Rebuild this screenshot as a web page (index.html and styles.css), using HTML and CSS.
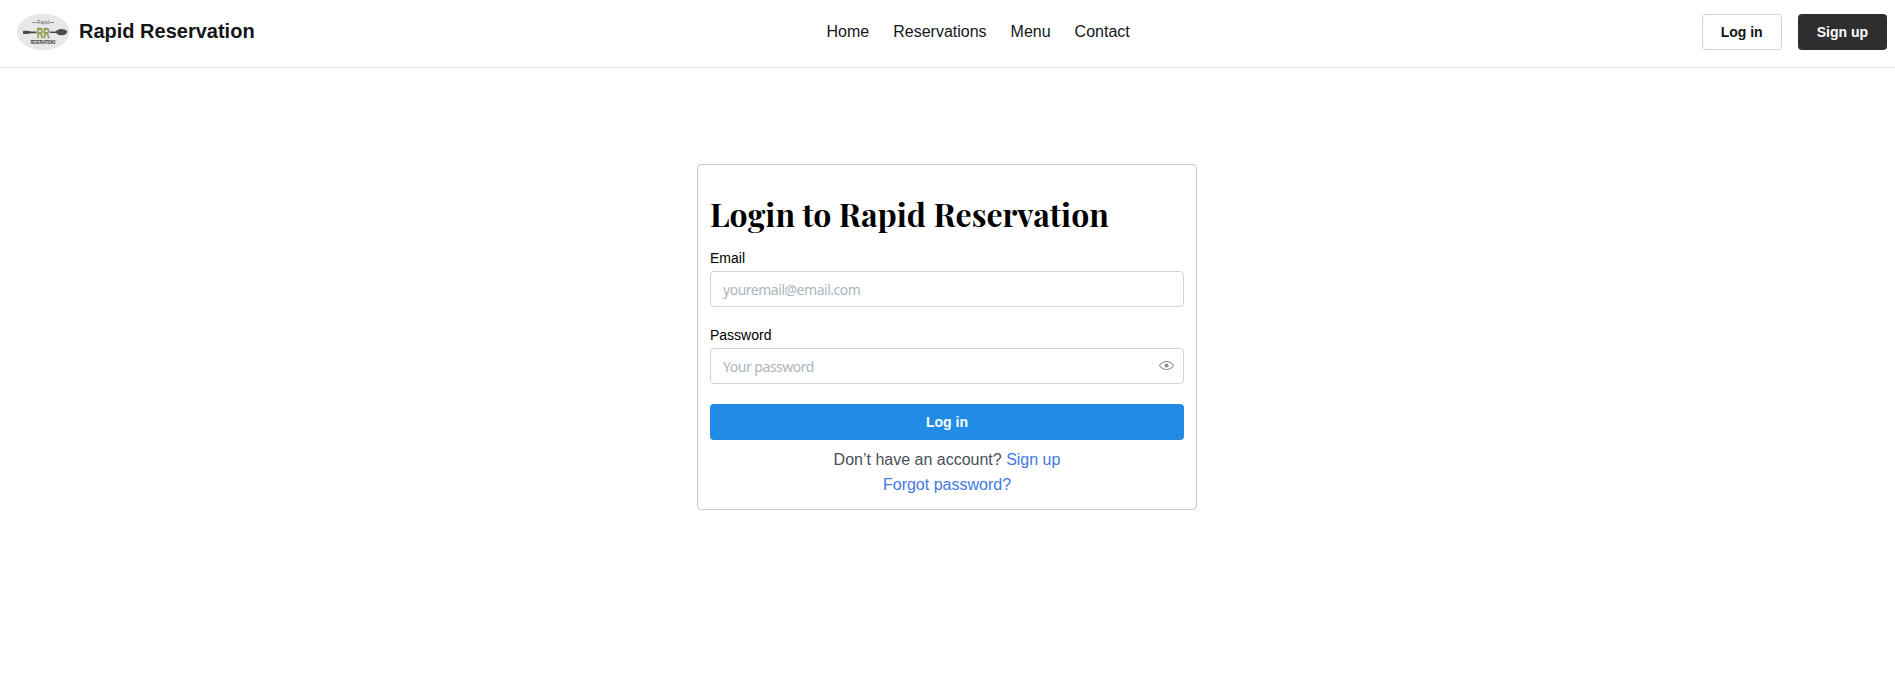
FILE: index.html
```html
<!DOCTYPE html>
<html lang="en">
<head>
<meta charset="utf-8">
<title>Rapid Reservation</title>
<link rel="stylesheet" href="styles.css">
</head>
<body>
<header class="header">
  <a class="brand">
    <svg class="logo" viewBox="0 0 53 38" width="53" height="38">
      <ellipse cx="26.2" cy="19" rx="26.200" ry="18.300" fill="#e7e7e7"/>
      <path d="M15.500 9.500h4M33 9.500h4" stroke="#777" stroke-width=".9"/>
      <text x="26.200" y="11.300" class="logo-small" textLength="12.500" lengthAdjust="spacingAndGlyphs">Rapid</text>
      <path d="M6 18q4-.8 8 .4h5.500v1.800H14q-4 1.200-8 .5zM33 18.500h6.500v1.500H33z" fill="#48494b"/>
      <path d="M38 19.300q3-3.600 7-3.300 4 .3 5.500 2.600-1 3.500-5.500 3.700-4 .2-7-3z" fill="#48494b"/>
      <text x="26.200" y="24.500" class="logo-mark" textLength="13" lengthAdjust="spacingAndGlyphs">RR</text>
      <text x="26" y="30.500" class="logo-name" textLength="24.500" lengthAdjust="spacingAndGlyphs">RESERVATIONS</text>
    </svg>
    <span class="brand-name">Rapid Reservation</span>
  </a>
  <nav class="nav"><a>Home</a><a>Reservations</a><a>Menu</a><a>Contact</a></nav>
  <div class="actions">
    <button class="button button-default">Log in</button>
    <button class="button button-dark">Sign up</button>
  </div>
</header>
<main class="main">
  <form class="card">
    <h1 class="title">Login to Rapid Reservation</h1>
    <label class="label" for="email">Email</label>
    <input class="input" id="email" type="email" placeholder="youremail@email.com">
    <label class="label label-next" for="password">Password</label>
    <div class="password">
      <input class="input" id="password" type="password" placeholder="Your password">
      <svg class="eye" viewBox="0 0 15 15" width="15" height="15"><path fill="#868e96" fill-rule="evenodd" d="M7.500 11C4.800 11 2.570 9.620 1 7.500 2.570 5.380 4.800 4 7.500 4s4.930 1.380 6.500 3.500C12.430 9.620 10.200 11 7.500 11zm0-8C4.310 3 1.660 4.710 0 7.230v.54C1.660 10.290 4.310 12 7.500 12s5.840-1.710 7.500-4.230v-.54C13.340 4.710 10.690 3 7.500 3zm0 6.500a2 2 0 1 0 0-4 2 2 0 0 0 0 4z"/></svg>
    </div>
    <button class="button button-submit" type="button">Log in</button>
    <p class="note">Don’t have an account? <a class="link">Sign up</a></p>
    <p class="note"><a class="link">Forgot password?</a></p>
  </form>
</main>
</body>
</html>
```
FILE: styles.css
```css
* { box-sizing: border-box; }
body {
  margin: 0;
  background: #fff;
  color: #000;
  font-family: "Liberation Sans", Arial, sans-serif;
  font-size: 16px;
}
.header {
  display: flex;
  align-items: center;
  justify-content: space-between;
  height: 68px;
  padding: 0 8px 4px 17px;
  border-bottom: 1px solid #dee2e6;
}
.brand { display: flex; align-items: center; gap: 9px; }
.logo { display: block; overflow: visible; }
.logo-small { font-size: 5px; text-anchor: middle; fill: #666; }
.logo-mark { font-size: 15px; font-weight: bold; text-anchor: middle; fill: #8c9c4e; stroke: #8c9c4e; stroke-width: .3px; }
.logo-name { font-size: 5.5px; font-weight: bold; text-anchor: middle; fill: #222; }
.brand-name { font-size: 20px; font-weight: bold; color: #141517; }
.nav { display: flex; gap: 24px; color: #141517; }
.actions { display: flex; gap: 16px; }
.button {
  height: 36px;
  padding: 0 18px;
  border: 1px solid transparent;
  border-radius: 4px;
  font: bold 14px "Liberation Sans", Arial, sans-serif;
}
.button-default { background: #fff; border-color: #ced4da; color: #141517; }
.button-dark { background: #2e2e2e; color: #fff; }
.main { display: flex; justify-content: center; padding: 96px 1px 0 0; }
.card {
  width: 500px;
  height: 346px;
  padding: 27px 12px 0;
  border: 1px solid #c8c9cc;
  border-radius: 4px;
}
.title {
  height: 44px;
  margin: 0;
  font: bold 32px/44px "Playfair Display", "Liberation Serif", serif;
  white-space: nowrap;
}
.label { display: block; margin: 10px 0 1px; font-size: 14px; line-height: 24px; }
.label-next { margin-top: 16px; }
.input {
  display: block;
  width: 100%;
  height: 36px;
  padding: 0 12px;
  border: 1px solid #ced4da;
  border-radius: 4px;
  background: #fff;
  font: 14px "Noto Sans", sans-serif;
  letter-spacing: -.48px;
}
.input::placeholder { color: #adb5bd; opacity: 1; }
.password { position: relative; }
.eye { position: absolute; right: 10px; top: 10px; }
.button-submit { display: block; width: 100%; margin: 20px 0 7px; background: #228be6; color: #fff; }
.note { margin: 0; text-align: center; line-height: 25px; color: #495057; }
.link { color: #4478e3; }
```
